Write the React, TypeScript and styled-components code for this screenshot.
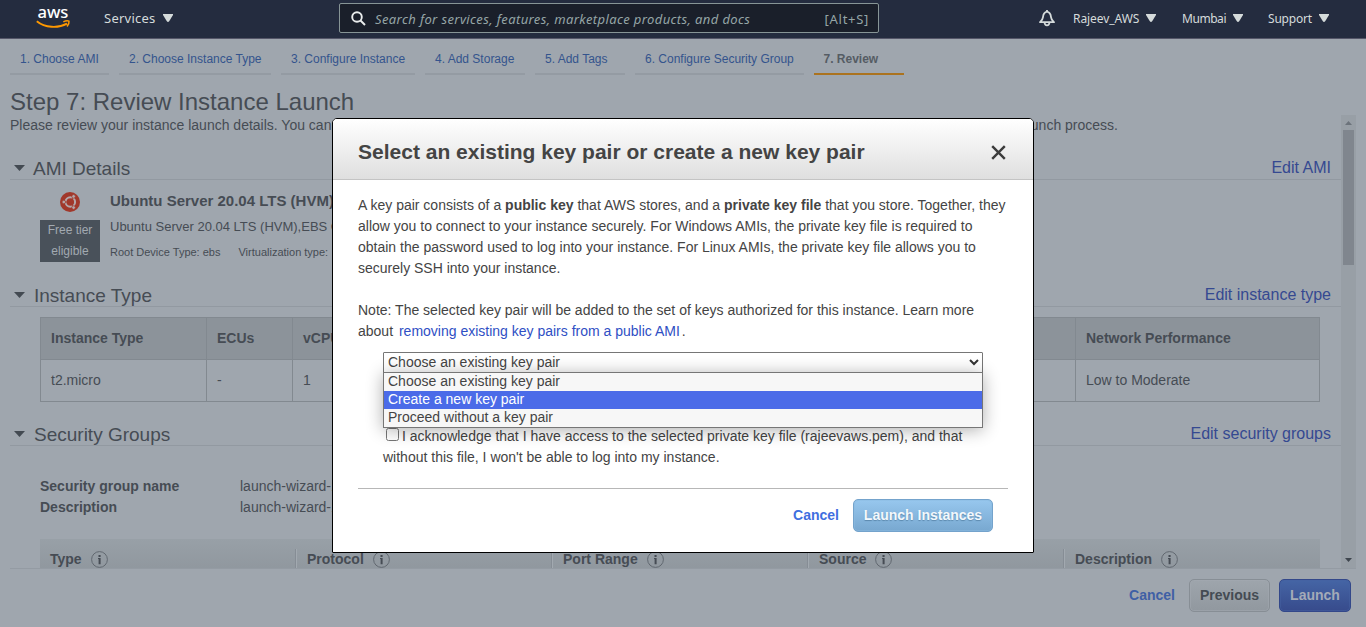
import React from "react";
import styled, { createGlobalStyle } from "styled-components";

const Global = createGlobalStyle`
  * { box-sizing: border-box; }
  html, body { margin: 0; height: 100%; overflow: hidden; }
  body { background: #9fa6ae; }
`;

const Page = styled.div`
  position: relative;
  width: 1366px;
  height: 627px;
  overflow: hidden;
  display: flex;
  flex-direction: column;
  background: #9fa6ae;
  color: #464c54;
  font: 14px/21px "Liberation Sans", Arial, sans-serif;
`;

/* ---- top navigation ---- */
const TopBar = styled.header`
  height: 39px;
  flex: none;
  display: flex;
  align-items: flex-start;
  background: #242c3f;
  border-bottom: 1px solid #555769;
  font-family: "Noto Sans", sans-serif;
  color: #d5dbdb;
`;
const Logo = styled.svg`
  width: 36px;
  height: 28px;
  margin: 4px 0 0 35px;
  flex: none;
  overflow: visible;
`;
const NavItem = styled.div<{ $size: number; $left: number; $width: number; $spacing?: number }>`
  display: flex;
  align-items: center;
  justify-content: space-between;
  height: 36px;
  margin-left: ${(p) => p.$left}px;
  width: ${(p) => p.$width}px;
  font-size: ${(p) => p.$size}px;
  letter-spacing: ${(p) => p.$spacing ?? 0}px;
  white-space: nowrap;
`;
const NavArrow = styled.svg<{ $w: number }>`
  width: ${(p) => p.$w}px;
  height: 8px;
  fill: #d5dbdb;
  flex: none;
`;
const SearchBox = styled.div`
  display: flex;
  align-items: center;
  width: 540px;
  height: 30px;
  margin: 3px 0 0 166px;
  padding: 0 9px 0 11px;
  background: #1a1f2a;
  border: 1px solid #879596;
  border-radius: 2px;
  color: #95a5a6;
  font-size: 13px;
`;
const SearchText = styled.span`
  margin-left: 9px;
  font-style: italic;
  letter-spacing: 0.39px;
  padding-top: 2px;
  flex: 1;
  white-space: nowrap;
`;
const Shortcut = styled.span`
  padding-top: 2px;
  letter-spacing: 0.7px;
`;
const Bell = styled.svg`
  width: 16px;
  height: 17px;
  margin: 10px 0 0 160px;
  flex: none;
`;

/* ---- wizard ---- */
const Tabs = styled.nav`
  display: flex;
  gap: 10px;
  height: 36px;
  padding-left: 10px;
  flex: none;
`;
const Tab = styled.div<{ $active?: boolean; $width: number }>`
  width: ${(p) => p.$width}px;
  padding-left: ${(p) => (p.$active ? 9.5 : 10)}px;
  font-size: 12px;
  line-height: 40px;
  height: 36px;
  white-space: nowrap;
  color: ${(p) => (p.$active ? "#555c64" : "#34548d")};
  font-weight: ${(p) => (p.$active ? "bold" : "normal")};
  border-bottom: 2px solid ${(p) => (p.$active ? "#ab731f" : "#949ba3")};
`;
const Title = styled.h1`
  margin: 0;
  padding: 11px 0 0 10px;
  height: 40px;
  flex: none;
  font-size: 24px;
  line-height: 32px;
  font-weight: normal;
`;
const Scroller = styled.main`
  display: flex;
  flex: none;
  width: 1346px;
  height: 454px;
  margin-left: 10px;
  border-bottom: 1px solid #949ba3;
`;
const Content = styled.div`
  width: 1331px;
  overflow: hidden;
`;
const Intro = styled.div`
  display: flex;
  justify-content: space-between;
  width: 1108px;
  white-space: nowrap;
`;
const SectionHead = styled.div<{ $top: number }>`
  display: flex;
  align-items: flex-end;
  height: 24px;
  margin-top: ${(p) => p.$top}px;
  padding: 0 10px 0 4px;
  border-bottom: 1px solid #9299a1;
`;
const Caret = styled.svg`
  width: 11px;
  height: 6px;
  margin-bottom: 8px;
  fill: #434a52;
`;
const SectionTitle = styled.h2<{ $gap: number }>`
  flex: 1;
  margin: 0 0 0 ${(p) => p.$gap}px;
  font-size: 19px;
  line-height: 20px;
  font-weight: normal;
`;
const EditLink = styled.a`
  font-size: 16px;
  line-height: 23px;
  color: #354991;
`;
const AmiRow = styled.div`
  display: flex;
  height: 103px;
  padding-left: 30px;
`;
const AmiSide = styled.div`
  width: 60px;
  display: flex;
  flex-direction: column;
  align-items: center;
  padding-top: 12px;
  gap: 8px;
`;
const FreeTier = styled.div`
  width: 60px;
  height: 42px;
  background: #49515a;
  color: #a2a9b1;
  font-size: 12px;
  text-align: center;
`;
const AmiInfo = styled.div`
  padding: 10px 0 0 10px;
  white-space: nowrap;
`;
const AmiName = styled.div`
  font-size: 15px;
  font-weight: bold;
`;
const AmiDesc = styled.div`
  font-size: 13px;
  margin-top: 5px;
`;
const AmiMeta = styled.div`
  display: flex;
  gap: 18px;
  font-size: 11px;
  margin-top: 5px;
`;
const TypeTable = styled.div`
  margin: 10px 0 0 30px;
  width: 1280px;
  border: 1px solid #828990;
  display: grid;
  grid-template-columns: 166px 86px 783px 243px;
  grid-template-rows: 42px 41px;
`;
const Cell = styled.div<{ $head?: boolean; $last?: boolean }>`
  padding-left: 10px;
  line-height: 41px;
  font-weight: ${(p) => (p.$head ? "bold" : "normal")};
  background: ${(p) => (p.$head ? "#8c939a" : "transparent")};
  border-right: ${(p) => (p.$last ? "0" : "1px solid #828990")};
  border-bottom: ${(p) => (p.$head ? "1px solid #828990" : "0")};
`;
const GroupInfo = styled.dl`
  display: grid;
  grid-template-columns: 200px 200px;
  margin: 30px 0 21px 30px;
  dt { font-weight: bold; }
  dd { margin: 0; }
`;
const RuleHead = styled.div`
  display: flex;
  width: 1280px;
  height: 42px;
  margin-left: 30px;
  background: linear-gradient(#98a0a7, #8d949b);
`;
const RuleCell = styled.div<{ $first?: boolean }>`
  display: flex;
  align-items: center;
  gap: 9px;
  flex: none;
  width: ${(p) => (p.$first ? 255 : 256)}px;
  height: 30px;
  margin-top: 10px;
  padding: 0 0 9px ${(p) => (p.$first ? 10 : 11)}px;
  font-weight: bold;
  border-left: ${(p) => (p.$first ? "0" : "1px solid #868d95")};
  box-shadow: ${(p) => (p.$first ? "none" : "inset 1px 0 #a2a9b0")};
`;
const Track = styled.div`
  display: flex;
  flex-direction: column;
  align-items: center;
  width: 15px;
  height: 453px;
  padding: 6px 0;
  background: #989fa6;
`;
const ScrollArrow = styled.svg<{ $color: string }>`
  width: 7px;
  height: 4px;
  fill: ${(p) => p.$color};
  flex: none;
`;
const Thumb = styled.div`
  width: 11px;
  height: 135px;
  margin: 5px 0 auto;
  background: #80868e;
`;
const Footer = styled.footer`
  display: flex;
  justify-content: flex-end;
  align-items: flex-start;
  padding: 10px 15px 0 0;
`;

type Tone = "grey" | "navy" | "sky";
const tones: Record<Tone, { bg: string; border: string; color: string; glow: string }> = {
  grey: { bg: "linear-gradient(#9ea5ac, #91989f)", border: "#878e95", color: "#444b53", glow: "#a3aab1" },
  navy: { bg: "linear-gradient(#4565a5, #374b8c)", border: "#33488a", color: "#a4abb8", glow: "#4562a2" },
  sky: { bg: "linear-gradient(#97c7ee, #78a8d0)", border: "#74a3cc", color: "#f3f8fc", glow: "#8cbbe2" },
};
const Button = styled.button<{ $tone: Tone; $width: number; $left: number }>`
  width: ${(p) => p.$width}px;
  height: 33px;
  margin: 0 0 0 ${(p) => p.$left}px;
  padding: 0;
  font: bold 14px/21px "Liberation Sans", Arial, sans-serif;
  border-radius: 5px;
  border: 1px solid ${(p) => tones[p.$tone].border};
  background: ${(p) => tones[p.$tone].bg};
  color: ${(p) => tones[p.$tone].color};
  box-shadow: inset 0 0 0 1px ${(p) => tones[p.$tone].glow}80;
  text-shadow: ${(p) => (p.$tone === "sky" ? "0 1px 1px #5b88ad" : "none")};
`;
const CancelLink = styled.a<{ $bright?: boolean }>`
  font-weight: bold;
  line-height: 33px;
  color: ${(p) => (p.$bright ? "#3f6fe0" : "#3f60a5")};
`;

/* ---- key pair dialog ---- */
const Dialog = styled.section`
  position: absolute;
  left: 332px;
  top: 118px;
  width: 702px;
  height: 435px;
  background: #fff;
  border: 1px solid #000;
  border-radius: 5px 5px 1px 1px;
  color: #444;
  overflow: hidden;
`;
const DialogHead = styled.div`
  display: flex;
  align-items: center;
  justify-content: space-between;
  height: 61px;
  padding: 5px 27px 0 25px;
  background: linear-gradient(#fff, #dfdfdf);
  border-bottom: 1px solid #c4c4c4;
`;
const DialogTitle = styled.h3`
  margin: 0;
  font-size: 21px;
  line-height: 28px;
`;
const CloseIcon = styled.svg`
  width: 15px;
  height: 15px;
  margin-top: 2px;
`;
const DialogBody = styled.div`
  padding: 15px 25px 0;
`;
const Para = styled.p`
  margin: 0 0 21px;
  white-space: nowrap;
`;
const DocLink = styled.a`
  color: #2f4fc4;
  margin: 0 2px;
`;
const KeyForm = styled.div`
  position: relative;
  width: 600px;
  margin: -11px 0 0 25px;
`;
const SelectBox = styled.div`
  display: flex;
  align-items: center;
  justify-content: space-between;
  height: 21px;
  padding: 0 3px 0 4px;
  border: 1px solid #767676;
  border-radius: 1px;
`;
const Menu = styled.div`
  position: absolute;
  top: 20px;
  left: 0;
  width: 600px;
  border: 1px solid #767676;
  background: #f7f7f7;
  box-shadow: 0 2px 16px rgba(0, 0, 0, 0.32);
`;
const Option = styled.div<{ $on?: boolean }>`
  height: 18px;
  padding-left: 4px;
  line-height: 17px;
  color: ${(p) => (p.$on ? "#fff" : "#444")};
  background: ${(p) => (p.$on ? "#4b6be8" : "transparent")};
`;
const Acknowledge = styled.div`
  margin-top: 53px;
  white-space: nowrap;
`;
const CheckBox = styled.span`
  display: inline-block;
  width: 13px;
  height: 13px;
  margin: 0 3px;
  vertical-align: 0;
  border: 1px solid #767676;
  border-radius: 2.5px;
  background: #fff;
`;
const Actions = styled.div`
  display: flex;
  justify-content: flex-end;
  margin-top: 20px;
  padding: 10px 15px 0 0;
  border-top: 1px solid #b7b7b7;
`;

const DownArrow = ({ w }: { w: number }) => (
  <NavArrow $w={w} viewBox="0 0 10 8" preserveAspectRatio="none">
    <path d="M0 0H10V1L6.3 7Q5 8.8 3.7 7L0 1Z" />
  </NavArrow>
);
const Info = () => (
  <svg width="17" height="17" viewBox="0 0 17 17">
    <circle cx="8.5" cy="8.5" r="7.9" fill="none" stroke="#5c636b" strokeWidth="0.9" />
    <path d="M7 7h2.6v6.2H7.6V8H7zM7.5 4h2.1v1.9H7.5z" fill="#464c54" />
  </svg>
);
const Section = ({ top, gap = 9, title, edit }: { top: number; gap?: number; title: string; edit: string }) => (
  <SectionHead $top={top}>
    <Caret viewBox="0 0 11 6" preserveAspectRatio="none"><path d="M0 0H11L5.5 6Z" /></Caret>
    <SectionTitle $gap={gap}>{title}</SectionTitle>
    <EditLink>{edit}</EditLink>
  </SectionHead>
);

const steps: [string, number][] = [
  ["1. Choose AMI", 99],
  ["2. Choose Instance Type", 152],
  ["3. Configure Instance", 134],
  ["4. Add Storage", 100],
  ["5. Add Tags", 90],
  ["6. Configure Security Group", 169],
  ["7. Review", 90],
];
const ruleColumns = ["Type", "Protocol", "Port Range", "Source", "Description"];

export default function App() {
  return (
    <Page>
      <Global />
      <TopBar>
        <Logo viewBox="0 0 36 28">
          <text x="2.4" y="14" fontFamily="Noto Sans, sans-serif" fontSize="17" fontWeight="500" fill="#fff" textLength="31" lengthAdjust="spacingAndGlyphs">aws</text>
          <path d="M1.8 17.2C10 24 23 24.5 32 19.6" fill="none" stroke="#ff9900" strokeWidth="1.9" />
          <path d="M28.3 17.8Q32 16 34 17.2Q34.5 19.5 32 22.4" fill="none" stroke="#ff9900" strokeWidth="1.5" />
        </Logo>
        <NavItem $size={13} $left={33} $width={69} $spacing={0.25}>Services <DownArrow w={10} /></NavItem>
        <SearchBox>
          <svg width="15" height="15" viewBox="0 0 15 15" fill="none" stroke="#eaeded" strokeWidth="1.9">
            <circle cx="6" cy="6" r="4.8" /><path d="M9.5 9.5L14 14" />
          </svg>
          <SearchText>Search for services, features, marketplace products, and docs</SearchText>
          <Shortcut>[Alt+S]</Shortcut>
        </SearchBox>
        <Bell viewBox="0 0 16 17" fill="none" stroke="#d5dbdb" strokeWidth="1.8">
          <path d="M8 1.6C5.2 2 4.3 4 4 7.2C3.8 9.4 2.5 10.6 1 12.2H15C13.5 10.6 12.2 9.4 12 7.2C11.7 4 10.8 2 8 1.6Z" strokeLinejoin="round" />
          <path d="M5.5 12.5Q5.8 15.4 8 15.4Q10.2 15.4 10.5 12.5M8 0V2" />
        </Bell>
        <NavItem $size={12} $left={18} $width={83} $spacing={-0.07}>Rajeev_AWS <DownArrow w={10} /></NavItem>
        <NavItem $size={12} $left={26} $width={61} $spacing={-0.45}>Mumbai <DownArrow w={10} /></NavItem>
        <NavItem $size={12} $left={25} $width={61} $spacing={-0.2}>Support <DownArrow w={10} /></NavItem>
      </TopBar>

      <Tabs>
        {steps.map(([label, width], i) => (
          <Tab key={label} $width={width} $active={i === 6}>{label}</Tab>
        ))}
      </Tabs>
      <Title>Step 7: Review Instance Launch</Title>

      <Scroller>
        <Content>
          <Intro>
            <span>Please review your instance launch details. You can</span>
            <span>complete the launch process.</span>
          </Intro>
          <Section top={20} gap={8} title="AMI Details" edit="Edit AMI" />
          <AmiRow>
            <AmiSide>
              <svg width="20" height="20" viewBox="0 0 20 20">
                <circle cx="10" cy="10" r="10" fill="#a1382b" />
                <circle cx="10.3" cy="10" r="4.8" fill="none" stroke="#b3a8ab" strokeWidth="2" />
                <path d="M10.3 10H3M10.3 10L14 3.6M10.3 10L14 16.4" stroke="#a1382b" strokeWidth="0.9" />
                <g fill="#b3a8ab" stroke="#a1382b" strokeWidth="0.7">
                  <circle cx="3.8" cy="10" r="1.8" />
                  <circle cx="13.6" cy="4.4" r="1.8" />
                  <circle cx="13.6" cy="15.6" r="1.8" />
                </g>
              </svg>
              <FreeTier>Free tier<br />eligible</FreeTier>
            </AmiSide>
            <AmiInfo>
              <AmiName>Ubuntu Server 20.04 LTS (HVM)</AmiName>
              <AmiDesc>Ubuntu Server 20.04 LTS (HVM),EBS General</AmiDesc>
              <AmiMeta><span>Root Device Type: ebs</span><span>Virtualization type:</span></AmiMeta>
            </AmiInfo>
          </AmiRow>

          <Section top={0} title="Instance Type" edit="Edit instance type" />
          <TypeTable>
            <Cell $head>Instance Type</Cell>
            <Cell $head>ECUs</Cell>
            <Cell $head>vCPUs</Cell>
            <Cell $head $last>Network Performance</Cell>
            <Cell>t2.micro</Cell>
            <Cell>-</Cell>
            <Cell>1</Cell>
            <Cell $last>Low to Moderate</Cell>
          </TypeTable>

          <Section top={20} title="Security Groups" edit="Edit security groups" />
          <GroupInfo>
            <dt>Security group name</dt><dd>launch-wizard-1</dd>
            <dt>Description</dt><dd>launch-wizard-1</dd>
          </GroupInfo>
          <RuleHead>
            {ruleColumns.map((name, i) => (
              <RuleCell key={name} $first={i === 0}>{name}<Info /></RuleCell>
            ))}
          </RuleHead>
        </Content>
        <Track>
          <ScrollArrow $color="#6c737b" viewBox="0 0 7 4"><path d="M0 4H7L3.5 0Z" /></ScrollArrow>
          <Thumb />
          <ScrollArrow $color="#3f464e" viewBox="0 0 7 4"><path d="M0 0H7L3.5 4Z" /></ScrollArrow>
        </Track>
      </Scroller>
      <Footer>
        <CancelLink>Cancel</CancelLink>
        <Button $tone="grey" $width={81} $left={14}>Previous</Button>
        <Button $tone="navy" $width={72} $left={9}>Launch</Button>
      </Footer>

      <Dialog>
        <DialogHead>
          <DialogTitle>Select an existing key pair or create a new key pair</DialogTitle>
          <CloseIcon viewBox="0 0 15 15" stroke="#3c3c3c" strokeWidth="2.4">
            <path d="M1.2 1.2L13.8 13.8M13.8 1.2L1.2 13.8" />
          </CloseIcon>
        </DialogHead>
        <DialogBody>
          <Para>
            A key pair consists of a <b>public key</b> that AWS stores, and a <b>private key file</b> that you store. Together, they<br />
            allow you to connect to your instance securely. For Windows AMIs, the private key file is required to<br />
            obtain the password used to log into your instance. For Linux AMIs, the private key file allows you to<br />
            securely SSH into your instance.
          </Para>
          <Para>
            Note: The selected key pair will be added to the set of keys authorized for this instance. Learn more<br />
            about <DocLink>removing existing key pairs from a public AMI</DocLink>.
          </Para>
          <KeyForm>
            <SelectBox>
              Choose an existing key pair
              <svg width="10" height="7" viewBox="0 0 10 7" fill="none" stroke="#333" strokeWidth="2"><path d="M1 1L5 5L9 1" /></svg>
            </SelectBox>
            <Menu>
              <Option>Choose an existing key pair</Option>
              <Option $on>Create a new key pair</Option>
              <Option>Proceed without a key pair</Option>
            </Menu>
            <Acknowledge>
              <CheckBox />I acknowledge that I have access to the selected private key file (rajeevaws.pem), and that<br />
              without this file, I won't be able to log into my instance.
            </Acknowledge>
          </KeyForm>
          <Actions>
            <CancelLink $bright>Cancel</CancelLink>
            <Button $tone="sky" $width={140} $left={14}>Launch Instances</Button>
          </Actions>
        </DialogBody>
      </Dialog>
    </Page>
  );
}
